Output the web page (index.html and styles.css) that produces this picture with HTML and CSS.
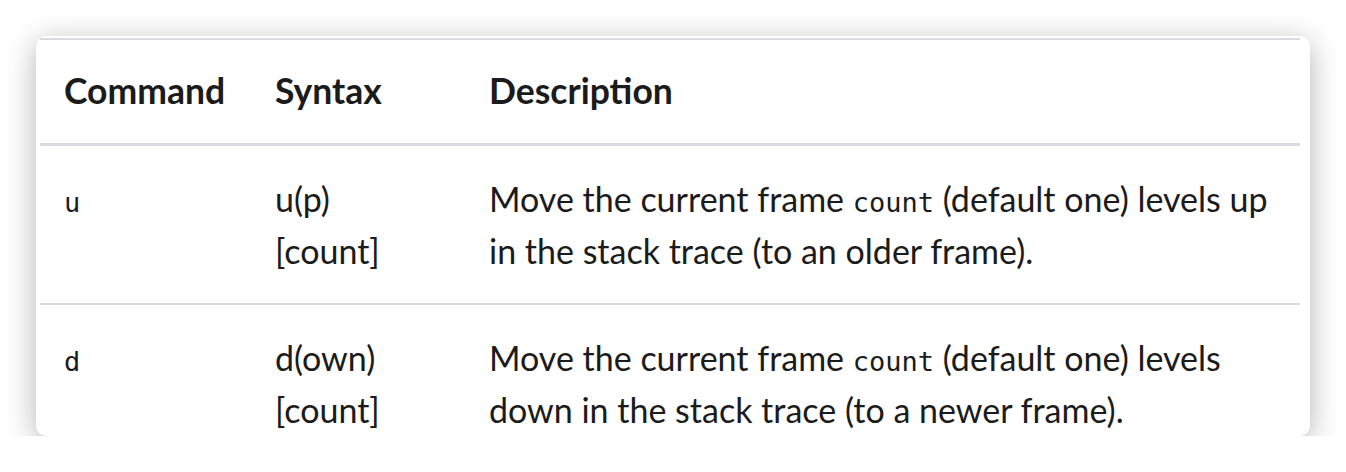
FILE: index.html
```html
<!DOCTYPE html>
<html>
<head>
<meta charset="utf-8">
<link rel="stylesheet" href="styles.css">
</head>
<body>
<div class="card">
  <table class="cmds">
    <colgroup>
      <col class="c1">
      <col class="c2">
      <col class="c3">
    </colgroup>
    <thead>
      <tr><th>Command</th><th>Syntax</th><th>Description</th></tr>
    </thead>
    <tbody>
      <tr>
        <td><code>u</code></td>
        <td>u(p)<br>[count]</td>
        <td>Move the current frame <code>count</code> (default one) levels up in the stack trace (to an older frame).</td>
      </tr>
      <tr>
        <td><code>d</code></td>
        <td>d(own)<br>[count]</td>
        <td>Move the current frame <code>count</code> (default one) levels down in the stack trace (to a newer frame).</td>
      </tr>
    </tbody>
  </table>
</div>
</body>
</html>
```
FILE: styles.css
```css
html, body {
  margin: 0;
  padding: 0;
  background: #ffffff;
}
body {
  padding: 36px 36px 0 36px;
  font-family: "Lato", "Noto Sans", sans-serif;
  color: #1b1b1b;
}
.card {
  width: 1274px;
  height: 400px;
  box-sizing: border-box;
  padding: 2px 10px 0 4px;
  background: #fff;
  border-radius: 10px;
  box-shadow: 0 6px 30px rgba(0, 0, 0, 0.3);
  overflow: hidden;
}
.cmds {
  width: 1260px;
  border-collapse: collapse;
  table-layout: fixed;
  font-size: 34px;
  line-height: 52px;
  border-top: 2px solid #d8dce0;
}
.c1 { width: 211px; }
.c2 { width: 214px; }
.cmds th {
  text-align: left;
  font-weight: 700;
  font-size: 35.5px;
  padding: 25px 24px 26px 24px;
  border-bottom: 3px solid #d8dce0;
  vertical-align: top;
}
.cmds td {
  padding: 27px 24px 26px 24px;
  vertical-align: top;
  border-bottom: 2px solid #d8dce0;
}
code {
  font-family: "DejaVu Sans Mono", monospace;
  font-size: 27px;
  line-height: 1;
}
```
